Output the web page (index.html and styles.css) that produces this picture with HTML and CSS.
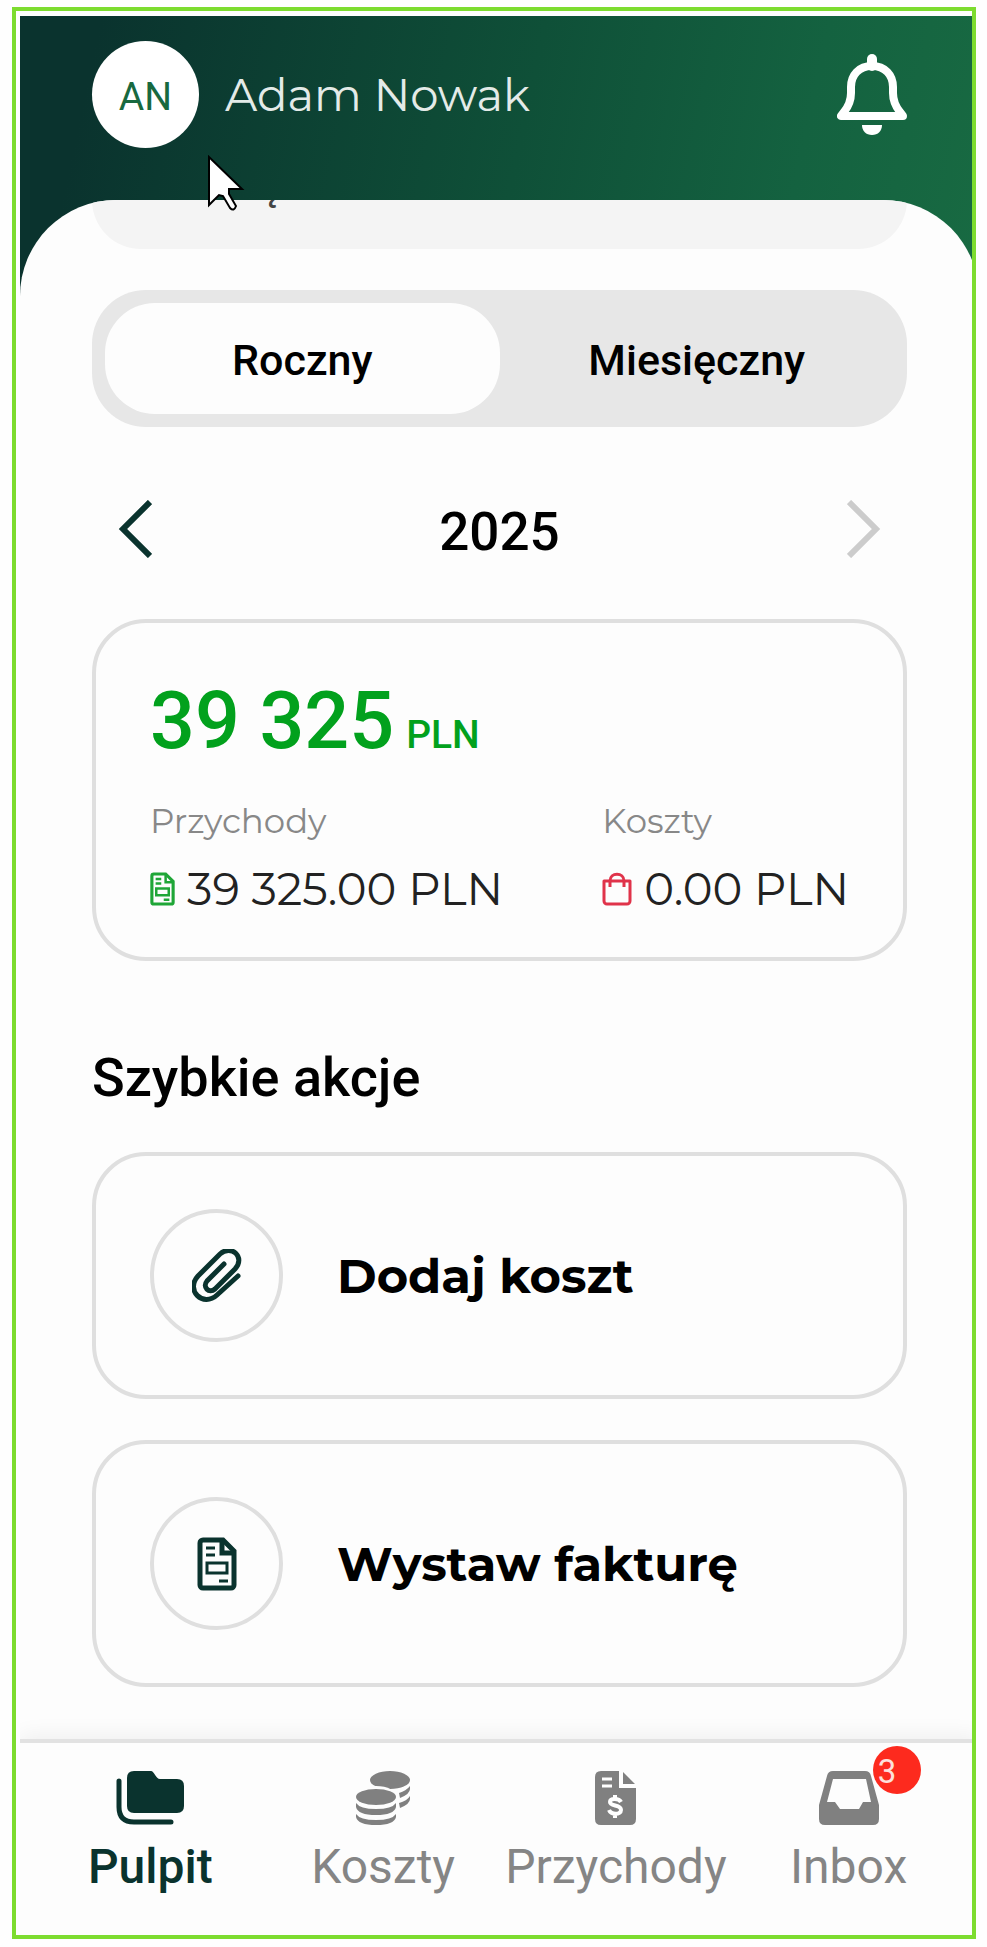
FILE: index.html
```html
<!DOCTYPE html>
<html lang="pl">
<head>
  <meta charset="UTF-8" />
  <meta name="viewport" content="width=device-width, initial-scale=1.0" />
  <title>Pulpit</title>
  <link rel="stylesheet" href="styles.css">
</head>
<body>
  <div class="frame">
    <div class="app">
      <header class="header">
        <div class="avatar">AN</div>
        <div class="user-name">Adam Nowak</div>
        <button class="icon-button" aria-label="Powiadomienia">
          <svg width="70" height="82" viewBox="0 0 70 82" fill="none">
            <path d="M35 5v7" stroke="#fff" stroke-width="10" stroke-linecap="round" />
            <path d="M35 12c-13 0-21 9-21 21v6c0 9-3 14-7 19l-3 4h62l-3-4c-4-5-7-10-7-19v-6c0-12-8-21-21-21z" stroke="#fff" stroke-width="8" stroke-linejoin="round" />
            <path d="M25 71h20c0 6-4 10-10 10s-10-4-10-10z" fill="#fff" />
          </svg>
        </button>
      </header>

      <main class="sheet">
        <div class="banner"><span>˛</span></div>

        <div class="switch">
          <button class="switch-item active">Roczny</button>
          <button class="switch-item">Miesięczny</button>
        </div>

        <div class="year-row">
          <button class="icon-button" aria-label="Poprzedni rok">
            <svg width="34" height="58" viewBox="0 0 34 58" fill="none" stroke="#0a332e" stroke-width="6"><path d="M32 2L5 29l27 27" /></svg>
          </button>
          <span class="year">2025</span>
          <button class="icon-button" aria-label="Następny rok">
            <svg width="34" height="58" viewBox="0 0 34 58" fill="none" stroke="#ccc" stroke-width="6"><path d="M2 2l27 27L2 56" /></svg>
          </button>
        </div>

        <section class="card summary">
          <div class="total">39 325<small>PLN</small></div>
          <div class="columns">
            <div>
              <div class="label">Przychody</div>
              <div class="value">
                <svg width="25" height="34" viewBox="0 0 40 54" fill="none" stroke="#1fa637" stroke-width="5">
                  <path d="M5 3h20l12 12v33a3 3 0 0 1-3 3H6a3 3 0 0 1-3-3V6a3 3 0 0 1 3-3z" />
                  <path d="M25 3v13h12M9 11h9M9 18h9M10 26h20v11H10zM22 44h9" stroke-width="4" />
                </svg>
                39 325.00 PLN
              </div>
            </div>
            <div>
              <div class="label">Koszty</div>
              <div class="value">
                <svg width="30" height="34" viewBox="0 0 30 34" fill="none" stroke="#e0334a" stroke-width="3">
                  <path d="M2 9h26v20a3 3 0 0 1-3 3H5a3 3 0 0 1-3-3z" stroke-linejoin="round" />
                  <path d="M8 15V9c0-9 14-9 14 0v6" />
                </svg>
                0.00 PLN
              </div>
            </div>
          </div>
        </section>

        <h2>Szybkie akcje</h2>

        <button class="card action">
          <span class="circle">
            <svg width="50" height="54" viewBox="0 0 50 54" fill="none" stroke="#0a332e" stroke-width="5" stroke-linecap="round">
              <path d="M32 15L15 32c-5 6 2 13 8 8l20-20c11-12-4-25-15-15L6 27c-13 14 5 32 19 19l21-19" />
            </svg>
          </span>
          Dodaj koszt
        </button>

        <button class="card action">
          <span class="circle">
            <svg width="40" height="54" viewBox="0 0 40 54" fill="none" stroke="#0a332e" stroke-width="5">
              <path d="M6 3h20l11 11v34a3 3 0 0 1-3 3H6a3 3 0 0 1-3-3V6a3 3 0 0 1 3-3z" />
              <path d="M25 3v13h13" />
              <path d="M9 11h9M9 18h9M10 26h20v10H10zM22 44h9" stroke-width="3" />
            </svg>
          </span>
          Wystaw fakturę
        </button>
      </main>

      <nav class="nav">
        <a href="#" class="nav-item active">
          <svg width="68" height="54" viewBox="0 0 68 54">
            <path d="M18 0h17c3 0 5 8 9 8h17q7 0 7 7v20q0 7-7 7H18q-7 0-7-7V7q0-7 7-7z" fill="#0a332e" />
            <path d="M3 10v26q0 15 15 15h37" fill="none" stroke="#0a332e" stroke-width="5" stroke-linecap="round" />
          </svg>
          Pulpit
        </a>
        <a href="#" class="nav-item">
          <svg width="54" height="54" viewBox="0 0 54 54" fill="#808080">
            <ellipse cx="34" cy="9" rx="20" ry="9" />
            <path d="M43 22q7-2 11-7v3q0 5-10 9zM43 32q8-2 11-7v3q0 5-10 9z" />
            <ellipse cx="20" cy="26" rx="21" ry="11" fill="#fdfdfd" />
            <ellipse cx="20" cy="26" rx="20" ry="8" />
            <path d="M0 32q4 6 20 6t20-6v4q-2 8-20 8T0 36zM0 43q4 6 20 6t20-6v3q-2 8-20 8T0 46z" />
          </svg>
          Koszty
        </a>
        <a href="#" class="nav-item">
          <svg width="41" height="54" viewBox="0 0 41 54">
            <path d="M6 0h18v17h17v31q0 6-6 6H6q-6 0-6-6V6q0-6 6-6zM28 1l12 12H28z" fill="#808080" />
            <path d="M7 8h10M7 15h10" stroke="#fff" stroke-width="3" />
            <path d="M26 31c-2-4-11-4-11 0 0 5 11 2 11 8 0 5-10 5-12 0M20 24v5M20 42v5" fill="none" stroke="#fff" stroke-width="4" />
          </svg>
          Przychody
        </a>
        <a href="#" class="nav-item">
          <span class="nav-icon">
            <svg width="60" height="54" viewBox="0 0 60 54">
              <path d="M14 0h32q5 0 6 5l8 29v14q0 6-6 6H6q-6 0-6-6V34L8 5q1-5 6-5zM14 8L8 31h8l5 7h19l4-7h8L47 8z" fill="#808080" fill-rule="evenodd" />
            </svg>
            <span class="badge">3</span>
          </span>
          Inbox
        </a>
      </nav>

      <svg class="cursor" width="38" height="57" viewBox="0 0 38 57" fill="#fff" stroke="#000" stroke-width="2">
        <path d="M2 2v48l10-10 4 1 7 12q4 4 6-2l-7-12v-5h13z" />
      </svg>
    </div>
  </div>
</body>
</html>
```
FILE: styles.css
```css
* {
  box-sizing: border-box;
}
body {
  margin: 0;
  padding: 7px 11px 7px 12px;
  background-color: #fefefe;
  color: #000;
  font-family: Roboto, sans-serif;
}
button {
  padding: 0;
  border: none;
  background: none;
  color: inherit;
  font: inherit;
  cursor: pointer;
}
svg {
  display: block;
  flex-shrink: 0;
}
.frame {
  border: 4px solid #7ddc2f;
  padding: 5px 0 0 4px;
}
.app {
  position: relative;
  overflow: hidden;
  background: linear-gradient(102deg, #0a332e 8%, #0f5038 52%, #146240 80%, #186a42) no-repeat;
  background-size: 100% 290px;
}
.header, .sheet, .nav {
  margin-right: -7px;
}
.header {
  display: flex;
  align-items: center;
  gap: 26px;
  padding: 25px 72px 52px;
}
.avatar {
  display: flex;
  align-items: center;
  justify-content: center;
  width: 107px;
  height: 107px;
  padding-top: 5px;
  border-radius: 50%;
  background-color: #fff;
  color: #18693f;
  font-size: 39px;
}
.user-name {
  flex: 1;
  color: #e4ebe8;
  font-family: Montserrat, Inter, sans-serif;
  font-size: 45px;
}
.sheet {
  overflow: hidden;
  padding: 0 72px 52px;
  border-radius: 96px 96px 0 0;
  background-color: #fdfdfd;
}
.banner {
  overflow: hidden;
  height: 49px;
  margin-bottom: 41px;
  padding-left: 176px;
  border-radius: 0 0 54px 54px;
  background-color: #f4f4f4;
  color: #444;
  font-size: 40px;
  line-height: 0;
}
.banner span {
  display: block;
  margin-top: -14px;
}
.switch {
  display: flex;
  padding: 13px;
  border-radius: 54px;
  background-color: #e7e7e7;
}
.switch-item {
  flex: 1;
  height: 111px;
  padding-top: 3px;
  border-radius: 50px;
  font-size: 43px;
  font-weight: 500;
}
.switch-item.active {
  background-color: #fdfdfd;
}
.year-row {
  display: flex;
  align-items: center;
  justify-content: space-between;
  margin: 73px 26px 61px;
}
.year {
  padding-top: 6px;
  font-size: 53px;
  font-weight: 500;
  line-height: 52px;
}
.card {
  border: 4px solid #dfdfdf;
  border-radius: 54px;
}
.summary {
  padding: 58px 54px 40px;
}
.total {
  display: flex;
  align-items: baseline;
  gap: 12px;
  color: #02a11d;
  font-size: 79px;
  font-weight: 500;
  line-height: 80px;
}
.total small {
  font-size: 39px;
  line-height: 40px;
}
.columns {
  display: flex;
  justify-content: space-between;
  margin-top: 38px;
  font-family: Montserrat, Inter, sans-serif;
}
.label {
  margin-bottom: 18px;
  color: #888;
  font-size: 34px;
  line-height: 44px;
}
.value {
  display: flex;
  align-items: center;
  gap: 12px;
  color: #222;
  font-size: 45px;
  line-height: 56px;
}
h2 {
  margin: 85px 0 42px;
  font-size: 54px;
  font-weight: 500;
  line-height: 64px;
}
.action {
  display: flex;
  align-items: center;
  gap: 54px;
  width: 100%;
  padding: 53px 54px;
  font-family: Montserrat, Inter, sans-serif;
  font-size: 48px;
  font-weight: 700;
}
.action + .action {
  margin-top: 41px;
}
.circle {
  display: flex;
  align-items: center;
  justify-content: center;
  width: 133px;
  height: 133px;
  border: 4px solid #dfdfdf;
  border-radius: 50%;
}
.nav {
  position: relative;
  display: flex;
  padding: 28px 14px 38px;
  border-top: 4px solid #e2e2e2;
  background-color: #fdfdfd;
  box-shadow: 0 -4px 20px rgba(0, 0, 0, 0.06);
}
.nav-item {
  display: flex;
  flex: 1;
  flex-direction: column;
  align-items: center;
  gap: 12px;
  color: #858585;
  font-size: 48px;
  line-height: 60px;
  text-decoration: none;
}
.nav-item.active {
  color: #0a332e;
  font-weight: 500;
}
.nav-icon {
  position: relative;
}
.badge {
  position: absolute;
  top: -25px;
  right: -42px;
  width: 48px;
  height: 48px;
  padding-left: 5px;
  border-radius: 50%;
  background-color: #fd2a1e;
  color: #fde0dc;
  font-size: 33px;
  line-height: 52px;
}
.cursor {
  position: absolute;
  top: 139px;
  left: 187px;
}
```
